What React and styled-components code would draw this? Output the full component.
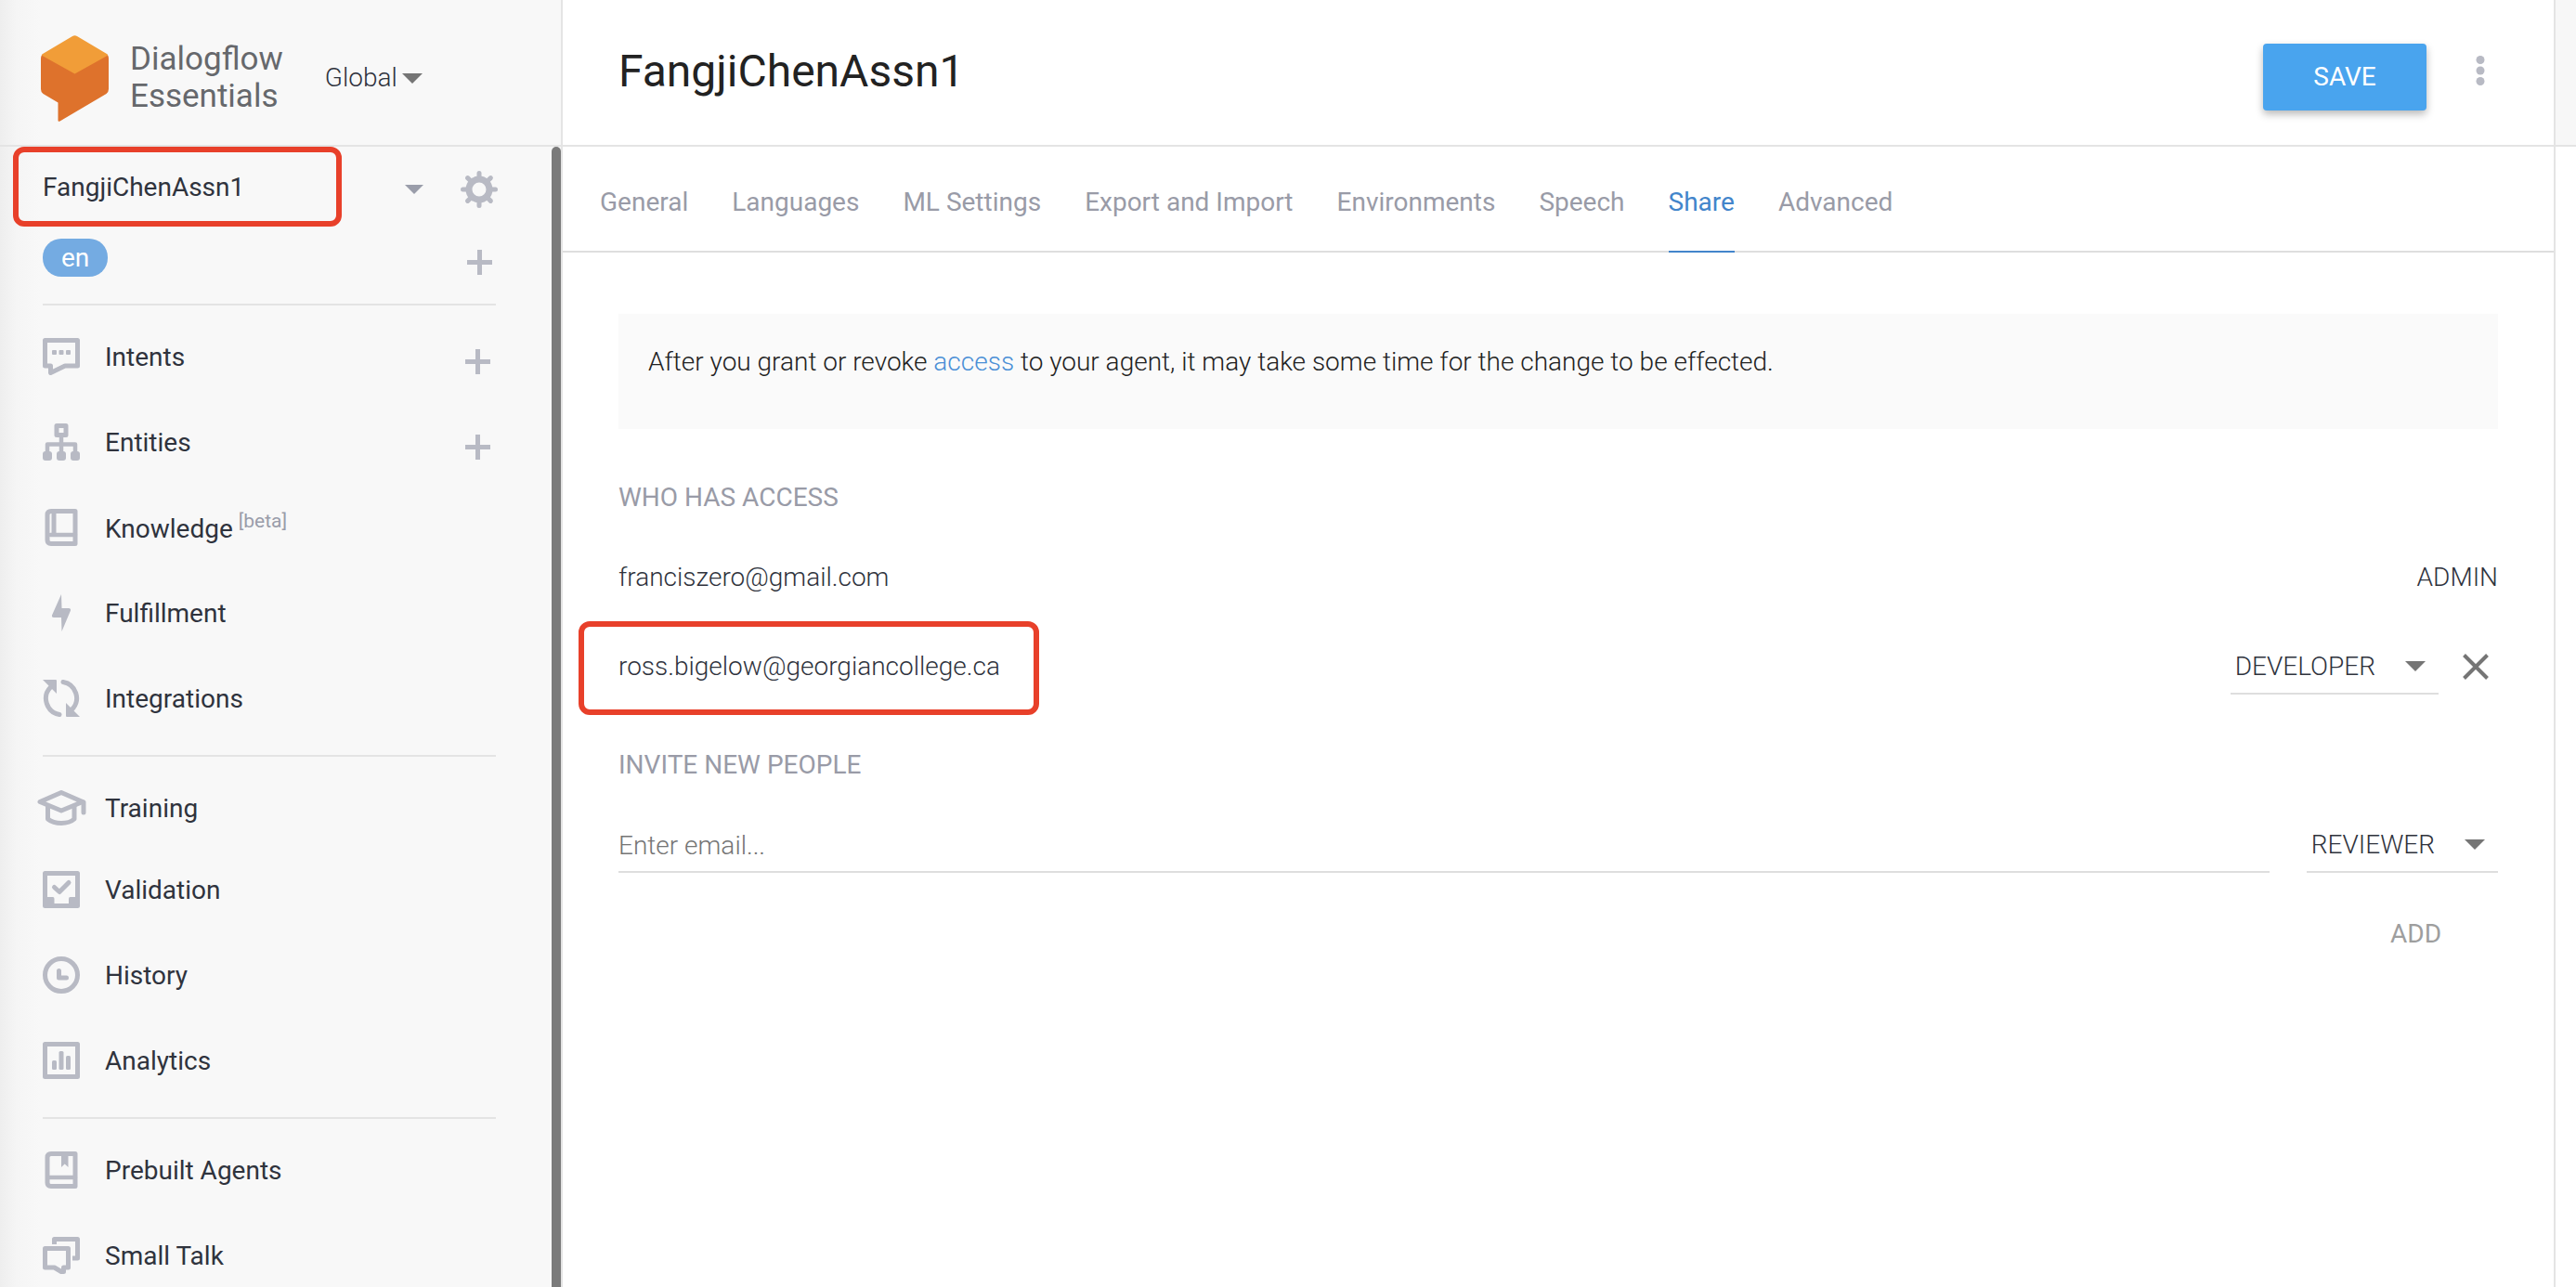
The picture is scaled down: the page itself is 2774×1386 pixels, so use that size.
import React from "react";
import styled, { createGlobalStyle, css } from "styled-components";

const GlobalStyle = createGlobalStyle`
  *, *::before, *::after { box-sizing: border-box; }
  body {
    margin: 0;
    background: #fff;
    color: #2f333d;
    font-family: Roboto, "Liberation Sans", sans-serif;
    font-size: 28px;
    line-height: 36px;
  }
  button, input, select {
    margin: 0;
    padding: 0;
    border: 0;
    border-radius: 0;
    background: none;
    color: inherit;
    font: inherit;
  }
  button { cursor: pointer; }
  h1, h2, p, ul { margin: 0; padding: 0; font: inherit; list-style: none; }
  a { color: inherit; text-decoration: none; }
  svg { display: block; flex: none; }
`;

const outlined = css`
  position: relative;
  &::after {
    content: "";
    position: absolute;
    border: 6px solid #e8402a;
    border-radius: 12px;
    pointer-events: none;
  }
`;

const Page = styled.div`
  display: flex;
  height: 100vh;
  overflow: hidden;
`;

/* ---------- sidebar ---------- */

const Sidebar = styled.aside`
  flex: none;
  display: flex;
  flex-direction: column;
  width: 606px;
  border-right: 2px solid #e4e4e4;
  background: linear-gradient(to right, #eeeeee, #f5f5f5 18px, #f8f8f8 44px);
`;

const BrandBar = styled.div`
  flex: none;
  display: flex;
  align-items: center;
  height: 158px;
  padding: 12px 44px 0;
  border-bottom: 2px solid #e4e4e4;
`;

const BrandName = styled.div`
  margin-left: 23px;
  color: #66686c;
  font-size: 35px;
  line-height: 40px;
`;

const SidebarScroll = styled.div`
  flex: 1;
  display: flex;
  min-height: 0;
  overflow: hidden;
`;

const SidebarBody = styled.div`
  flex: 1;
  min-width: 0;
`;

const ScrollThumb = styled.div`
  width: 10px;
  height: 100%;
  border-radius: 5px 5px 0 0;
  background: #7b7b7b;
`;

const AgentRow = styled.div`
  display: flex;
  align-items: center;
  height: 88px;
  padding: 0 58px 0 46px;
`;

const AgentName = styled.a`
  ${outlined}
  flex: 1;
  margin-right: 48px;
  &::after { inset: -26px 0 -24px -32px; }
`;

const LanguageRow = styled.div`
  display: flex;
  justify-content: space-between;
  align-items: flex-start;
  height: 81px;
  padding: 11px 58px 0 46px;
`;

const LanguagePill = styled.a`
  padding: 3px 20px 2px;
  border-radius: 20px;
  background: #74abe2;
  color: #fff;
`;

const IconButton = styled.button`
  flex: none;
  display: flex;
  align-items: center;
  justify-content: center;
  width: ${(p) => p.$width || 40}px;
  height: ${(p) => p.$height || 40}px;
  color: ${(p) => p.$color || "#b8bac4"};
`;

const AgentButton = styled(IconButton)`
  height: 44px;
  padding-top: 3px;
  & + & { margin-left: 20px; }
`;

const NavGroup = styled.ul`
  margin: 0 60px 0 46px;
  padding: 9px 0 15px;
  border-top: 2px solid #e4e4e4;
`;

const NavItem = styled.li`
  display: flex;
  align-items: center;
  justify-content: space-between;
  height: ${(p) => (p.$short ? 88 : 92)}px;
  padding-top: ${(p) => (p.$short ? 4 : 0)}px;
`;

const NavLink = styled.a`
  display: flex;
  align-items: center;
  gap: 27px;
`;

const NavLabel = styled.span`
  padding-top: 2px;
`;

const NavIcon = styled.span`
  display: flex;
  justify-content: center;
  width: 40px;
  color: #b8bac4;
`;

const Beta = styled.sup`
  margin-left: 6px;
  color: #9a9daa;
  font-size: 21px;
  line-height: 20px;
  vertical-align: 11px;
`;

const AddButton = styled(IconButton)`
  padding-top: 10px;
`;

/* ---------- main ---------- */

const Main = styled.main`
  flex: 1;
  min-width: 0;
`;

const Header = styled.header`
  display: flex;
  align-items: flex-start;
  gap: 39px;
  height: 158px;
  padding: 47px 60px 0;
  border-bottom: 2px solid #e4e4e4;
`;

const Title = styled.h1`
  flex: 1;
  color: #222;
  font-size: 48px;
  line-height: 60px;
`;

const SaveButton = styled.button`
  width: 176px;
  height: 72px;
  border-radius: 4px;
  background: #49a4ee;
  box-shadow: 0 4px 8px rgba(0, 0, 0, 0.28);
  color: #fff;
`;

const Tabs = styled.nav`
  display: flex;
  gap: 47px;
  padding: 0 40px;
  border-bottom: 2px solid #dedede;
`;

const Tab = styled.a`
  margin-bottom: -2px;
  padding: 42px 0 34px;
  border-bottom: 2px solid ${(p) => (p.$active ? "#4285cb" : "transparent")};
  color: ${(p) => (p.$active ? "#4285cb" : "#999ba7")};
`;

const Content = styled.div`
  padding: 66px 60px;
`;

const Notice = styled.p`
  padding: 34px 32px 54px;
  background: #fafafa;
  color: #222;
  font-weight: 300;
  a { color: #4a8fd6; }
`;

const SectionTitle = styled.h2`
  margin-top: ${(p) => p.$top}px;
  color: #999ba7;
`;

const AccessList = styled.ul`
  margin-top: 20px;
`;

const AccessRow = styled.li`
  display: flex;
  align-items: center;
  gap: 16px;
  height: 96px;
  font-weight: 300;
`;

const Email = styled.span`
  margin-right: auto;
  ${(p) => p.$marked && outlined}
  &::after { inset: -31px -42px -34px -43px; }
`;

const SelectBox = styled.span`
  display: grid;
  align-items: center;
  border-bottom: ${(p) => (p.$plain ? 0 : "2px solid #dedede")};
  margin-left: ${(p) => (p.$plain ? 45 : 0)}px;
  font-weight: 300;
  select, svg { grid-area: 1 / 1; }
  select {
    appearance: none;
    field-sizing: content;
    height: 58px;
    padding-top: ${(p) => (p.$plain ? 0 : 2)}px;
    padding-left: ${(p) => (p.$plain ? 0 : 5)}px;
    padding-right: ${(p) => (p.$plain ? 27 : 68)}px;
    outline: none;
  }
  svg {
    justify-self: end;
    margin-right: ${(p) => (p.$plain ? 0 : 14)}px;
    color: #757575;
    pointer-events: none;
  }
`;

const InviteForm = styled.form`
  display: flex;
  flex-wrap: wrap;
  justify-content: flex-end;
  gap: 30px 40px;
  margin-top: 38px;
`;

const EmailInput = styled.input`
  flex: 1;
  min-width: 60%;
  height: 60px;
  padding-top: 2px;
  border-bottom: 2px solid #dedede;
  font-weight: 300;
  outline: none;
  &::placeholder { color: #757575; opacity: 1; }
`;

const FormActions = styled.div`
  flex-basis: 100%;
  display: flex;
  justify-content: flex-end;
`;

const SubmitButton = styled.button`
  height: 72px;
  padding: 0 61px;
  color: #9e9e9e;
`;

const TestPanel = styled.aside`
  flex: none;
  width: 24px;
  border-left: 2px solid #e4e4e4;
`;

const TestPanelHeader = styled.div`
  height: 158px;
  border-bottom: 2px solid #e4e4e4;
  background: #f7f7f7;
`;

/* ---------- drawings ---------- */

const Line = ({ width = 40, height = 40, stroke = 5, children }) => (
  <svg
    width={width}
    height={height}
    viewBox={`0 0 ${width} ${height}`}
    fill="none"
    stroke="currentColor"
    strokeWidth={stroke}
    strokeLinejoin="round"
    strokeLinecap="round"
    aria-hidden="true"
  >
    {children}
  </svg>
);

const Solid = (props) => <g fill="currentColor" stroke="none" {...props} />;

const Logo = () => (
  <svg width="73" height="93" viewBox="0 0 73 93" aria-hidden="true">
    <path
      fill="#de722c"
      d="M0 25Q0 21 3 20L36.500 22L70 20Q73 21 73 25V58Q73 61 70.500 63L20.500 92.500Q18.500 93.500 18.500 91.500V72.500L2.500 63Q0 61.500 0 58Z"
    />
    <path fill="#f19d38" d="M34 1Q36.500 -.5 39 1L71 20Q72.500 21 71.500 22L36.500 41.500L1.500 22Q.5 21 2 20Z" />
  </svg>
);

const Caret = ({ width = 22 }) => (
  <svg width={width} height={width / 2} viewBox="0 0 22 11" fill="currentColor" aria-hidden="true">
    <path d="M0 0H22L11 11Z" />
  </svg>
);

const Plus = () => (
  <Line width={27} height={27} stroke={5}>
    <path strokeLinecap="butt" d="M13.500 0V27M0 13.500H27" />
  </Line>
);

const Gear = () => (
  <Line>
    <circle cx="20" cy="20" r="11" strokeWidth="7" />
    {[0, 45, 90, 135, 180, 225, 270, 315].map((a) => (
      <path key={a} d="M20 8V2.500" transform={`rotate(${a} 20 20)`} />
    ))}
  </Line>
);

const Dots = () => (
  <svg width="10" height="34" viewBox="0 0 10 34" fill="currentColor" aria-hidden="true">
    <circle cx="5" cy="5.500" r="4.500" />
    <circle cx="5" cy="17" r="4.500" />
    <circle cx="5" cy="28.500" r="4.500" />
  </svg>
);

const Cross = () => (
  <Line width={28} height={28} stroke={4}>
    <path strokeLinecap="butt" d="M1.500 1.500L26.500 26.500M26.500 1.500L1.500 26.500" />
  </Line>
);

const Intents = () => (
  <Line>
    <path d="M2.500 2.500H37.500V30H24L8.500 37.500V30H2.500Z" />
    <Solid>
      <rect x="10" y="13" width="5" height="5" rx="1" />
      <rect x="17.500" y="13" width="5" height="5" rx="1" />
      <rect x="25" y="13" width="5" height="5" rx="1" />
    </Solid>
  </Line>
);

const Entities = () => (
  <Line>
    <rect x="15" y="2.500" width="10" height="10" />
    <path strokeWidth="4.500" strokeLinecap="butt" d="M20 14V34M5 34V22.500H35V34" />
    <Solid>
      <rect x="0" y="30" width="10" height="10" rx="3" />
      <rect x="15" y="30" width="10" height="10" rx="3" />
      <rect x="30" y="30" width="10" height="10" rx="3" />
    </Solid>
  </Line>
);

const Knowledge = () => (
  <Line>
    <path d="M9 2.500H35V37.500H9Q5 37.500 5 33.500V6.500Q5 2.500 9 2.500Z" />
    <path strokeLinecap="butt" d="M12 3V28" />
    <path strokeWidth="4.500" d="M8 28H35" />
  </Line>
);

const Fulfillment = () => (
  <Line>
    <Solid>
      <path d="M20 0L10 22.500Q9.500 25 12 25H20L20.500 40L30 17.500Q30.500 15 28 15H20.500Z" />
    </Solid>
  </Line>
);

const Integrations = () => (
  <Line>
    <path d="M8.500 8A17.500 17.500 0 0 0 18 37.500" />
    <path d="M22 2.500A17.500 17.500 0 0 1 31.500 32" />
    <Solid>
      <path d="M0 0H14Q15 0 15 1V15Z" />
      <path d="M40 40H26Q25 40 25 39V25Z" />
    </Solid>
  </Line>
);

const Training = () => (
  <Line width={54} height={38} stroke={5}>
    <path d="M4 12.500L27 2.500L50 12.500L27 22Z" />
    <path strokeLinecap="butt" d="M12.500 17V31Q18 35.500 27 35.500Q36 35.500 41 31V17" />
    <path d="M51 13V24" />
  </Line>
);

const Validation = () => (
  <Line>
    <rect x="2.500" y="2.500" width="35" height="35" />
    <path d="M12.500 17.500L18 22.500L28 12.500" />
    <Solid>
      <path d="M3 28H11Q12.500 28 12.500 30V35H28V30Q28 28 29.500 28H37V38H3Z" />
    </Solid>
  </Line>
);

const History = () => (
  <Line>
    <circle cx="20" cy="20" r="17.500" />
    <path d="M17.500 15.500V23H25.500" />
  </Line>
);

const Analytics = () => (
  <Line>
    <rect x="2.500" y="2.500" width="35" height="35" />
    <Solid>
      <rect x="10" y="20" width="5" height="10" rx="1.500" />
      <rect x="17.500" y="10" width="5" height="20" rx="1.500" />
      <rect x="25" y="15" width="5" height="15" rx="1.500" />
    </Solid>
  </Line>
);

const Prebuilt = () => (
  <Line>
    <path d="M9 2.500H35V37.500H9Q5 37.500 5 33.500V6.500Q5 2.500 9 2.500Z" />
    <path strokeWidth="4.500" d="M7 28H35" />
    <Solid>
      <path d="M20 3H27.500V17L23.700 13.500L20 17Z" />
    </Solid>
  </Line>
);

const SmallTalk = () => (
  <Line>
    <path d="M2.500 12.500H27.500V33H22.500V37.500H20L12.500 33H2.500Z" />
    <path strokeLinecap="butt" d="M12.500 8V2.500H37.500V23H32" />
  </Line>
);

/* ---------- data ---------- */

const NAV = [
  [
    { label: "Intents", Icon: Intents, add: true },
    { label: "Entities", Icon: Entities, add: true },
    { label: "Knowledge", Icon: Knowledge, beta: true },
    { label: "Fulfillment", Icon: Fulfillment },
    { label: "Integrations", Icon: Integrations },
  ],
  [
    { label: "Training", Icon: Training, short: true },
    { label: "Validation", Icon: Validation },
    { label: "History", Icon: History },
    { label: "Analytics", Icon: Analytics },
  ],
  [
    { label: "Prebuilt Agents", Icon: Prebuilt },
    { label: "Small Talk", Icon: SmallTalk },
  ],
];

const TABS = [
  "General",
  "Languages",
  "ML Settings",
  "Export and Import",
  "Environments",
  "Speech",
  "Share",
  "Advanced",
];

const ROLES = ["DEVELOPER", "REVIEWER"];

const Select = ({ label, value, options, plain }) => (
  <SelectBox $plain={plain}>
    <select aria-label={label} defaultValue={value}>
      {options.map((o) => (
        <option key={o}>{o}</option>
      ))}
    </select>
    <Caret />
  </SelectBox>
);

export default function App() {
  return (
    <Page>
      <GlobalStyle />
      <Sidebar>
        <BrandBar>
          <Logo />
          <BrandName>
            Dialogflow
            <br />
            Essentials
          </BrandName>
          <Select plain label="Region" value="Global" options={["Global"]} />
        </BrandBar>
        <SidebarScroll>
          <SidebarBody>
            <AgentRow>
              <AgentName href="#agent">FangjiChenAssn1</AgentName>
              <AgentButton aria-label="Switch agent" $color="#9a9daa" $width={60}>
                <Caret width={20} />
              </AgentButton>
              <AgentButton aria-label="Agent settings">
                <Gear />
              </AgentButton>
            </AgentRow>
            <LanguageRow>
              <LanguagePill href="#en">en</LanguagePill>
              <IconButton aria-label="Add language" $height={50}>
                <Plus />
              </IconButton>
            </LanguageRow>
            <nav>
              {NAV.map((group, i) => (
                <NavGroup key={i}>
                  {group.map(({ label, Icon, add, beta, short }) => (
                    <NavItem key={label} $short={short}>
                      <NavLink href={`#${label}`}>
                        <NavIcon>
                          <Icon />
                        </NavIcon>
                        <NavLabel>
                          {label}
                          {beta && <Beta>[beta]</Beta>}
                        </NavLabel>
                      </NavLink>
                      {add && (
                        <AddButton aria-label={`Create ${label}`}>
                          <Plus />
                        </AddButton>
                      )}
                    </NavItem>
                  ))}
                </NavGroup>
              ))}
            </nav>
          </SidebarBody>
          <ScrollThumb />
        </SidebarScroll>
      </Sidebar>

      <Main>
        <Header>
          <Title>FangjiChenAssn1</Title>
          <SaveButton>SAVE</SaveButton>
          <IconButton aria-label="More" $width={38} $height={58}>
            <Dots />
          </IconButton>
        </Header>
        <Tabs>
          {TABS.map((tab) => (
            <Tab key={tab} href={`#${tab}`} $active={tab === "Share"}>
              {tab}
            </Tab>
          ))}
        </Tabs>
        <Content>
          <Notice>
            After you grant or revoke <a href="#access">access</a> to your agent, it may take
            some time for the change to be effected.
          </Notice>
          <SectionTitle $top={56}>WHO HAS ACCESS</SectionTitle>
          <AccessList>
            <AccessRow>
              <Email>franciszero@gmail.com</Email>
              <span>ADMIN</span>
            </AccessRow>
            <AccessRow>
              <Email $marked>ross.bigelow@georgiancollege.ca</Email>
              <Select label="Role" value="DEVELOPER" options={ROLES} />
              <IconButton aria-label="Remove" $width={48} $color="#757575">
                <Cross />
              </IconButton>
            </AccessRow>
          </AccessList>
          <SectionTitle $top={40}>INVITE NEW PEOPLE</SectionTitle>
          <InviteForm>
            <EmailInput type="email" aria-label="Email" placeholder="Enter email..." />
            <Select label="New role" value="REVIEWER" options={ROLES} />
            <FormActions>
              <SubmitButton type="button">ADD</SubmitButton>
            </FormActions>
          </InviteForm>
        </Content>
      </Main>

      <TestPanel>
        <TestPanelHeader />
      </TestPanel>
    </Page>
  );
}
